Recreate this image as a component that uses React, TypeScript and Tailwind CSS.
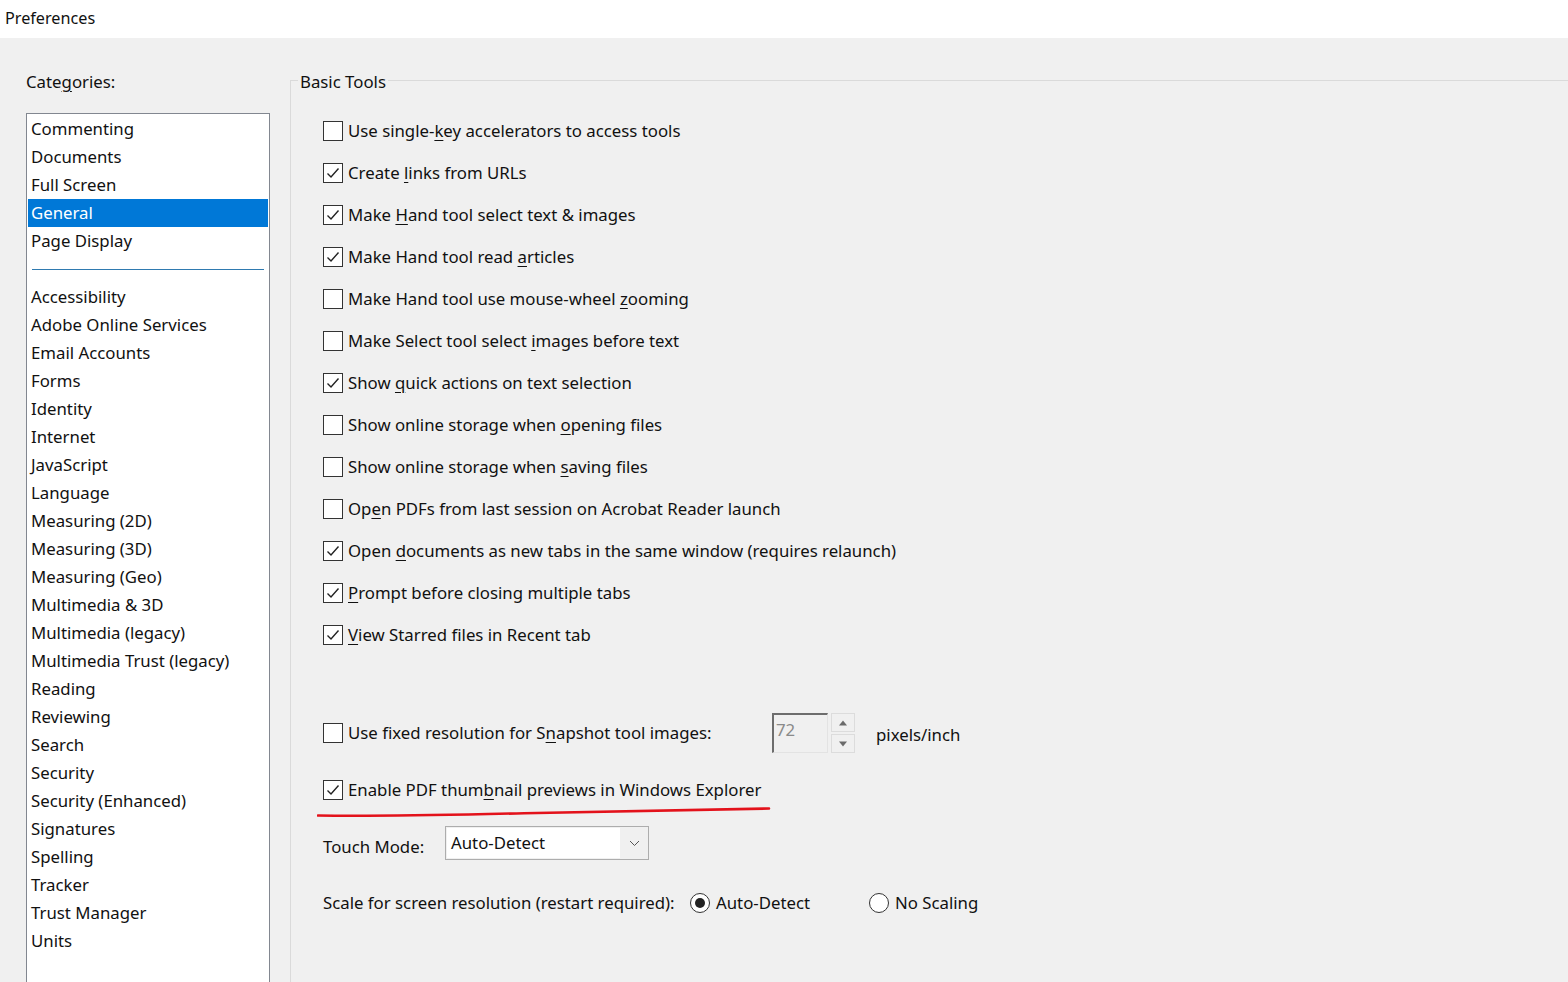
import React from "react";

const FONT = { fontFamily: '"Segoe UI", "Noto Sans", "Open Sans", sans-serif' };

function Box({ checked }: { checked: boolean }) {
  return (
    <div className="w-[20px] h-[20px] border border-[#333333] bg-white flex items-center justify-center shrink-0">
      {checked && (
        <svg width="16" height="16" viewBox="0 0 16 16">
          <polyline points="2.5,8.5 6,12 13.5,3.5" fill="none" stroke="#222" strokeWidth="1.4" />
        </svg>
      )}
    </div>
  );
}

function Label({ text, u }: { text: string; u: number }) {
  return (
    <span className="whitespace-nowrap">
      {text.slice(0, u)}
      <u className="underline underline-offset-[3px] decoration-1">{text[u]}</u>
      {text.slice(u + 1)}
    </span>
  );
}

const rows: { t: string; u: number; c: boolean }[] = [
  { t: "Use single-key accelerators to access tools", u: 11, c: false },
  { t: "Create links from URLs", u: 7, c: true },
  { t: "Make Hand tool select text & images", u: 5, c: true },
  { t: "Make Hand tool read articles", u: 20, c: true },
  { t: "Make Hand tool use mouse-wheel zooming", u: 31, c: false },
  { t: "Make Select tool select images before text", u: 24, c: false },
  { t: "Show quick actions on text selection", u: 5, c: true },
  { t: "Show online storage when opening files", u: 25, c: false },
  { t: "Show online storage when saving files", u: 25, c: false },
  { t: "Open PDFs from last session on Acrobat Reader launch", u: 2, c: false },
  { t: "Open documents as new tabs in the same window (requires relaunch)", u: 5, c: true },
  { t: "Prompt before closing multiple tabs", u: 0, c: true },
  { t: "View Starred files in Recent tab", u: 0, c: true },
];

const top = ["Commenting", "Documents", "Full Screen", "General", "Page Display"];
const rest = [
  "Accessibility",
  "Adobe Online Services",
  "Email Accounts",
  "Forms",
  "Identity",
  "Internet",
  "JavaScript",
  "Language",
  "Measuring (2D)",
  "Measuring (3D)",
  "Measuring (Geo)",
  "Multimedia & 3D",
  "Multimedia (legacy)",
  "Multimedia Trust (legacy)",
  "Reading",
  "Reviewing",
  "Search",
  "Security",
  "Security (Enhanced)",
  "Signatures",
  "Spelling",
  "Tracker",
  "Trust Manager",
  "Units",
];

function Radio({ on }: { on: boolean }) {
  return (
    <div className="w-[20px] h-[20px] rounded-full border border-[#333333] bg-white flex items-center justify-center shrink-0">
      {on && <div className="w-[10px] h-[10px] rounded-full bg-[#222222]" />}
    </div>
  );
}

export default function App() {
  return (
    <div className="w-[1568px] h-[982px] overflow-hidden text-[16.8px] text-[#111111] leading-[24px]" style={FONT}>
      <div className="h-[38px] bg-white flex items-center px-[5px] pb-[2px] text-[16.2px]">Preferences</div>
      <div className="h-[944px] bg-[#f0f0f0] flex">
        {/* Left column */}
        <div className="w-[290px] shrink-0 pl-[26px] flex flex-col">
          <div className="pt-[32px] h-[56px]">
            Cate<u className="underline underline-offset-[3px] decoration-1">g</u>ories:
          </div>
          <div className="mt-[19px] w-[244px] flex-1 border border-b-0 border-[#828790] bg-white p-[1px]">
            {top.map((n) => (
              <div
                key={n}
                className={
                  "h-[28px] flex items-center pl-[3px] " + (n === "General" ? "bg-[#0078d7] text-white" : "")
                }
              >
                {n}
              </div>
            ))}
            <div className="h-[28px] flex items-center px-[4px]">
              <div className="h-[1px] w-full bg-[#2f7ab0]" />
            </div>
            {rest.map((n) => (
              <div key={n} className="h-[28px] flex items-center pl-[3px]">
                {n}
              </div>
            ))}
          </div>
        </div>

        {/* Right group box */}
        <div className="flex-1 mt-[42px] border-l border-t border-[#dadada] relative pl-[32px] pt-[29px]">
          <span className="absolute left-[7px] top-[-11px] px-[2px] bg-[#f0f0f0] leading-[24px]">Basic Tools</span>
          {rows.map((r) => (
            <div key={r.t} className="h-[42px] flex items-center gap-[5px]">
              <Box checked={r.c} />
              <Label text={r.t} u={r.u} />
            </div>
          ))}

          <div className="mt-[56px] h-[42px] flex items-center">
            <div className="w-[449px] flex items-center gap-[5px]">
              <Box checked={false} />
              <Label text="Use fixed resolution for Snapshot tool images:" u={26} />
            </div>
            <div className="w-[56px] h-[40px] border border-t-[#6d6d6d] border-l-[#6d6d6d] border-r-[#e3e3e3] border-b-[#e3e3e3] border-[2px] border-r-[1px] border-b-[1px] bg-[#f0f0f0] text-[#8a8a8a] pl-[2px] leading-[30px]">
              72
            </div>
            <div className="ml-[3px] flex flex-col gap-[2px]">
              <div className="w-[24px] h-[19px] border border-[#dcdcdc] flex items-center justify-center">
                <svg width="10" height="6" viewBox="0 0 10 6">
                  <polygon points="5,0.5 9,5.5 1,5.5" fill="#6a6a6a" />
                </svg>
              </div>
              <div className="w-[24px] h-[19px] border border-[#dcdcdc] flex items-center justify-center">
                <svg width="10" height="6" viewBox="0 0 10 6">
                  <polygon points="1,0.5 9,0.5 5,5.5" fill="#6a6a6a" />
                </svg>
              </div>
            </div>
            <span className="ml-[21px] mt-[4px]">pixels/inch</span>
          </div>

          <div className="mt-[15px] h-[42px] flex items-center gap-[5px] relative">
            <Box checked={true} />
            <Label text="Enable PDF thumbnail previews in Windows Explorer" u={15} />
            <svg
              className="absolute left-[-6px] top-[36px]"
              width="460"
              height="14"
              viewBox="0 0 460 14"
            >
              <path
                d="M1,10.5 C80,11.5 140,9.5 220,8 C300,6.5 380,5.5 452,3.5"
                fill="none"
                stroke="#e3121b"
                strokeWidth="2.6"
                strokeLinecap="round"
              />
            </svg>
          </div>

          <div className="mt-[15px] h-[34px] flex items-start">
            <span className="w-[122px] mt-[9px]">Touch Mode:</span>
            <div className="w-[204px] h-[34px] border border-[#adadad] flex">
              <div className="flex-1 bg-white m-[1px] mr-0 pl-[4px] leading-[30px]">Auto-Detect</div>
              <div className="w-[28px] flex items-center justify-center">
                <svg width="11" height="7" viewBox="0 0 11 7">
                  <polyline points="1,1 5.5,5.5 10,1" fill="none" stroke="#555" strokeWidth="1" />
                </svg>
              </div>
            </div>
          </div>

          <div className="mt-[31px] h-[24px] flex items-center">
            <span className="w-[367px]">Scale for screen resolution (restart required):</span>
            <div className="w-[179px] flex items-center gap-[6px]">
              <Radio on={true} />
              <span>Auto-Detect</span>
            </div>
            <div className="flex items-center gap-[6px]">
              <Radio on={false} />
              <span>No Scaling</span>
            </div>
          </div>
        </div>
      </div>
    </div>
  );
}
